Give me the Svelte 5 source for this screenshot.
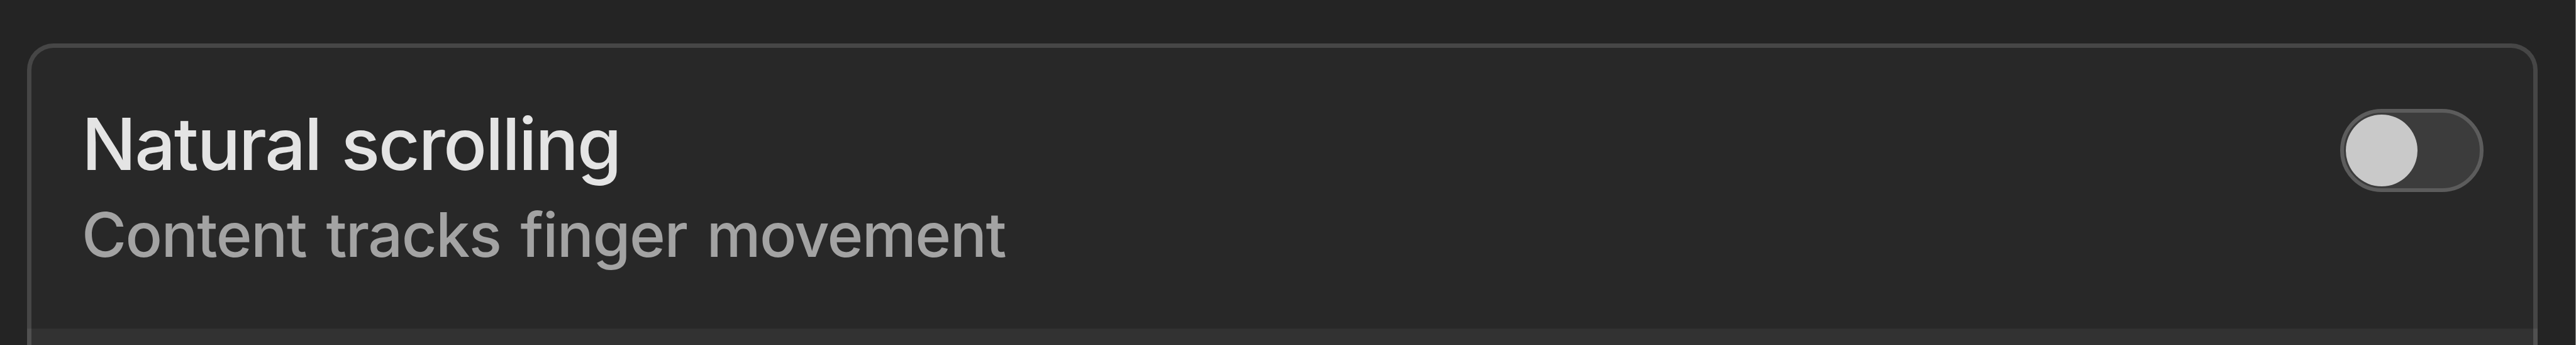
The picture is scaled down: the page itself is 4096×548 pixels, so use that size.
<script>
  let enabled = false;
</script>

<main>
  <section class="panel">
    <div class="row">
      <div class="label">
        <div class="title">Natural scrolling</div>
        <div class="subtitle">Content tracks finger movement</div>
      </div>
      <button
        class="switch"
        class:on={enabled}
        role="switch"
        aria-checked={enabled}
        aria-label="Natural scrolling"
        on:click={() => (enabled = !enabled)}
      >
        <span class="knob"></span>
      </button>
    </div>
    <div class="next-row"></div>
  </section>
</main>

<style>
  :global(body) {
    background: #242424;
    overflow: hidden;
  }

  main {
    box-sizing: border-box;
    height: 548px;
    padding: 69px 60px 0 43px;
    border-right: 1px solid #999996;
    overflow: hidden;
    background: #242424;
    font-family: Inter, "Liberation Sans", sans-serif;
  }

  .panel {
    box-sizing: border-box;
    height: 479px;
    border: 7px solid #464646;
    border-bottom: none;
    border-radius: 42px 42px 0 0;
    background: #282828;
  }

  .row {
    box-sizing: border-box;
    display: flex;
    justify-content: space-between;
    align-items: flex-start;
    height: 446px;
    padding: 97px 79px 0 80px;
  }

  .label {
    margin-top: -9px;
  }

  .title {
    line-height: 130px;
    font-size: 114.5px;
    font-weight: 500;
    letter-spacing: -2.4px;
    word-spacing: 4px;
    white-space: nowrap;
    color: #e4e4e4;
  }

  .subtitle {
    margin-top: 14px;
    line-height: 130px;
    font-size: 97px;
    font-weight: 500;
    letter-spacing: -1.62px;
    word-spacing: 7px;
    white-space: nowrap;
    color: #a3a3a3;
  }

  .switch {
    box-sizing: border-box;
    display: flex;
    align-items: center;
    width: 228px;
    height: 132px;
    padding: 0 3px;
    border: 6px solid #5c5c5c;
    border-radius: 66px;
    background: #3c3c3c;
  }

  .switch.on {
    justify-content: flex-end;
  }

  .knob {
    width: 114px;
    height: 114px;
    border-radius: 50%;
    background: #c9c9c9;
  }

  .next-row {
    height: 26px;
    margin: 0 -7px;
    border: solid #505050;
    border-width: 0 7px;
    background: #323232;
  }
</style>
